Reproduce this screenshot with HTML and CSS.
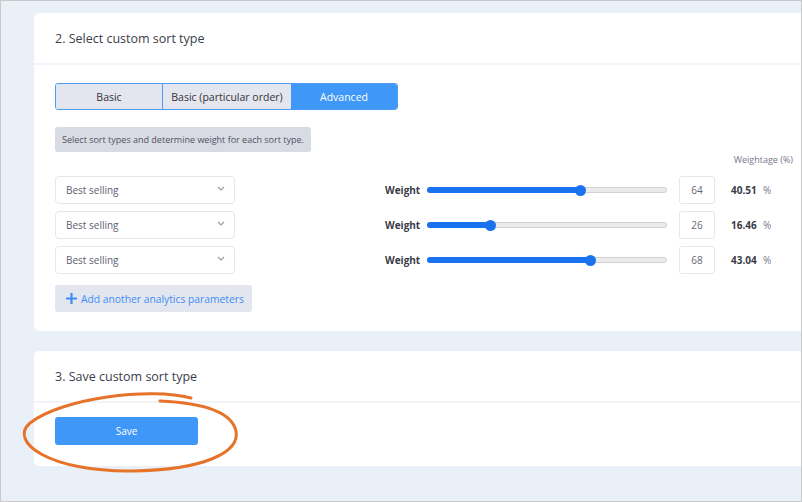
FILE: index.html
```html
<!DOCTYPE HTML>
<html>
    <head>
        <meta charset="UTF-8">
        <title>Custom sort type</title>
        <link rel="stylesheet" href="styles.css">
    </head>
    <body>
        <div id="wrap">
            <div class="card">
                <div class="card-head">2. Select custom sort type</div>
                <div class="card-body">
                    <ul class="seg">
                        <li class="basic">Basic</li>
                        <li class="order">Basic (particular order)</li>
                        <li class="adv on">Advanced</li>
                    </ul>
                    <div class="tip">Select sort types and determine weight for each sort type.</div>
                    <div class="wt-title">Weightage (%)</div>
                    <div class="rows">
                        <div class="row">
                            <div class="select">Best selling
                                <svg class="chev" width="8" height="5" viewBox="0 0 8 5"><path d="M1 1l3 3 3-3" fill="none" stroke="#9a9ca8" stroke-width="1.2"/></svg>
                            </div>
                            <span class="label">Weight</span>
                            <div class="track"><div class="fill" style="width:64%"></div><span class="thumb" style="left:64%"></span></div>
                            <div class="num">64</div>
                            <span class="pct">40.51</span><span class="unit">%</span>
                        </div>
                        <div class="row">
                            <div class="select">Best selling
                                <svg class="chev" width="8" height="5" viewBox="0 0 8 5"><path d="M1 1l3 3 3-3" fill="none" stroke="#9a9ca8" stroke-width="1.2"/></svg>
                            </div>
                            <span class="label">Weight</span>
                            <div class="track"><div class="fill" style="width:26%"></div><span class="thumb" style="left:26%"></span></div>
                            <div class="num">26</div>
                            <span class="pct">16.46</span><span class="unit">%</span>
                        </div>
                        <div class="row">
                            <div class="select">Best selling
                                <svg class="chev" width="8" height="5" viewBox="0 0 8 5"><path d="M1 1l3 3 3-3" fill="none" stroke="#9a9ca8" stroke-width="1.2"/></svg>
                            </div>
                            <span class="label">Weight</span>
                            <div class="track"><div class="fill" style="width:68%"></div><span class="thumb" style="left:68%"></span></div>
                            <div class="num">68</div>
                            <span class="pct">43.04</span><span class="unit">%</span>
                        </div>
                    </div>
                    <div class="add">
                        <svg width="11" height="11" viewBox="0 0 11 11"><path d="M5.5 0v11M0 5.5h11" stroke="#3d8ef5" stroke-width="2.2"/></svg>
                        Add another analytics parameters
                    </div>
                </div>
            </div>
            <div class="card save-card">
                <div class="card-head">3. Save custom sort type</div>
                <div class="card-body">
                    <div class="save">Save</div>
                </div>
            </div>
        </div>
        <svg class="mark" width="802" height="502" viewBox="0 0 802 502">
            <path d="M191 398 C150 387 62 398 30 423 C8 442 50 472 132 471 C205 470 240 452 236 431 C232 413 205 403 160 401" fill="none" stroke="#e6732a" stroke-width="3" stroke-linecap="round"/>
        </svg>
    </body>
</html>
```

FILE: styles.css
```css
html,body,ul,li{margin:0;padding:0;list-style:none;}
body{
    width:802px;
    height:502px;
    box-sizing:border-box;
    border:1px solid #c9c9c9;
    background-color:#eaf0f7;
    font-family:"Open Sans","Noto Sans",sans-serif;
    color:#3a3b4a;
    overflow:hidden;
}
#wrap{
    padding:12px 0 0 33px;
}
.card{
    background-color:#fff;
    border-radius:5px 0 0 5px;
    height:318px;
}
.card-head{
    display:flex;
    align-items:center;
    height:50px;
    padding-left:21px;
    font-size:12.5px;
    color:#3b3c4c;
    border-bottom:2px solid #f2f4f7;
}
.card-body{
    padding:18px 8px 0 21px;
}
.seg{
    display:flex;
    width:343px;
    height:27px;
    box-sizing:border-box;
    border:1px solid #4c9cf6;
    border-radius:3px;
    overflow:hidden;
}
.seg li{
    display:flex;
    align-items:center;
    justify-content:center;
    background-color:#e4e6ef;
    font-size:10.5px;
    color:#333;
}
.seg .basic{width:106px;border-right:1px solid #4c9cf6;}
.seg .order{width:128px;}
.seg li.on{
    flex:1;
    background-color:#3f97f7;
    color:#fff;
}
.tip{
    display:inline-flex;
    align-items:center;
    margin-top:17px;
    height:25px;
    padding:0 7px;
    background-color:#d9dbe4;
    border-radius:3px;
    font-size:9px;
    color:#505260;
}
.wt-title{
    text-align:right;
    font-size:9px;
    color:#77788a;
    margin-top:1px;
    height:23px;
}
.rows{
    display:flex;
    flex-direction:column;
    gap:7px;
}
.row{
    display:flex;
    align-items:center;
    height:28px;
}
.select{
    display:flex;
    align-items:center;
    justify-content:space-between;
    width:180px;
    height:28px;
    box-sizing:border-box;
    padding:0 9px 0 10px;
    border:1px solid #e5e7ee;
    border-radius:4px;
    font-size:10px;
    color:#5e6070;
    margin-right:150px;
}
.chev{margin-top:-3px;}
.label{
    width:42px;
    font-size:10px;
    font-weight:bold;
    color:#3a3b48;
}
.track{
    position:relative;
    width:240px;
    height:6px;
    box-sizing:border-box;
    border:1px solid #d2d2d2;
    border-radius:3px;
    background-color:#ebebeb;
}
.fill{
    height:6px;
    margin:-1px 0 0 -1px;
    border-radius:3px;
    background-color:#1a72ef;
}
.thumb{
    position:absolute;
    top:-3px;
    width:11px;
    height:11px;
    margin-left:-5px;
    border-radius:50%;
    background-color:#1a72ef;
}
.num{
    display:flex;
    align-items:center;
    justify-content:center;
    width:36px;
    height:28px;
    box-sizing:border-box;
    margin-left:12px;
    border:1px solid #e5e7ee;
    border-radius:3px;
    font-size:10px;
    color:#666877;
}
.pct{
    width:32px;
    margin-left:16px;
    font-size:10px;
    font-weight:bold;
    color:#3a3b48;
}
.unit{
    font-size:10px;
    color:#77788a;
}
.add{
    display:inline-flex;
    align-items:center;
    gap:4px;
    margin-top:11px;
    height:27px;
    padding:0 8px 0 11px;
    background-color:#e4e6ef;
    border-radius:3px;
    font-size:10.3px;
    color:#3d8ef5;
}
.save-card{
    margin-top:20px;
    height:115px;
}
.save-card .card-body{
    padding-top:14px;
}
.save{
    display:flex;
    align-items:center;
    justify-content:center;
    width:143px;
    height:28px;
    background-color:#3f98f8;
    border-radius:3px;
    font-size:10px;
    color:#fff;
}
.mark{
    position:absolute;
    top:0;
    left:0;
    pointer-events:none;
}
```
